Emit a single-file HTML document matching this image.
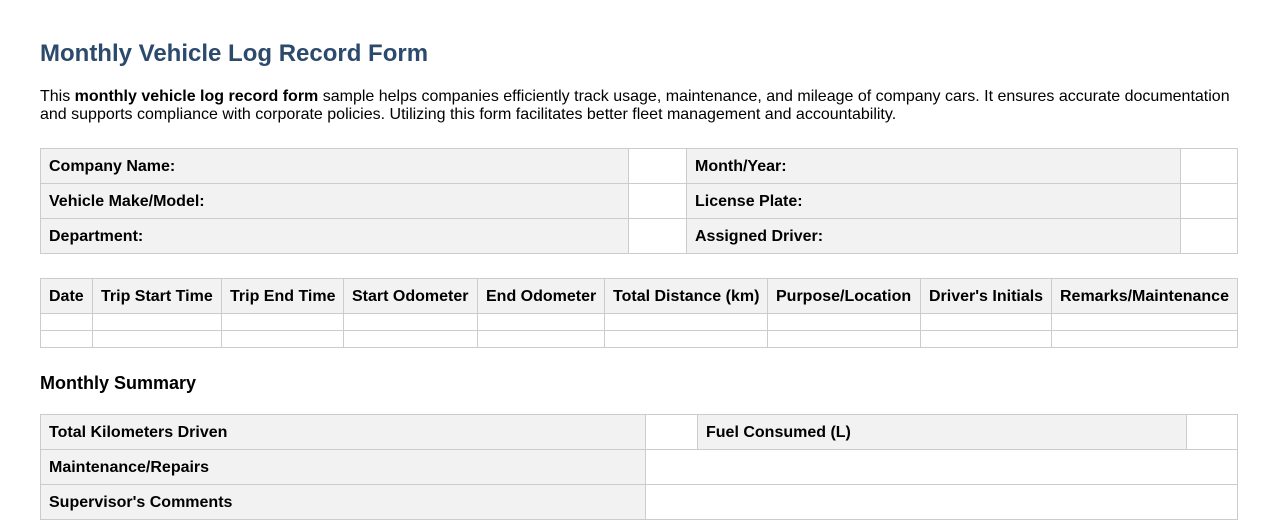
<!DOCTYPE html>
<html><head><style>
body{margin:0;background:#fff;font-family:"Liberation Sans",Arial,sans-serif;color:#000;}
h1{position:absolute;left:40px;top:40px;margin:0;font-size:24px;color:#2c4a6b;font-weight:bold;}
p{position:absolute;left:40px;top:88px;margin:0;font-size:16px;line-height:18px;width:1200px;}
table{border-collapse:collapse;table-layout:fixed;width:1197px;position:absolute;left:40px;}
td,th{border:1px solid #ccc;font-size:16px;font-weight:bold;padding:2px 8px 0;text-align:left;white-space:nowrap;overflow:hidden;}
.g{background:#f2f2f2;}
h2{position:absolute;left:40px;top:373px;margin:0;font-size:18px;font-weight:bold;}
</style></head><body>
<h1>Monthly Vehicle Log Record Form</h1>
<p>This <b>monthly vehicle log record form</b> sample helps companies efficiently track usage, maintenance, and mileage of company cars. It ensures accurate documentation and supports compliance with corporate policies. Utilizing this form facilitates better fleet management and accountability.</p>
<table style="top:148px">
<colgroup><col style="width:588px"><col style="width:58px"><col style="width:494px"><col style="width:57px"></colgroup>
<tr style="height:35px"><td class="g">Company Name:</td><td></td><td class="g">Month/Year:</td><td></td></tr>
<tr style="height:35px"><td class="g">Vehicle Make/Model:</td><td></td><td class="g">License Plate:</td><td></td></tr>
<tr style="height:35px"><td class="g">Department:</td><td></td><td class="g">Assigned Driver:</td><td></td></tr>
</table>
<table style="top:278px">
<colgroup><col style="width:52px"><col style="width:129px"><col style="width:122px"><col style="width:134px"><col style="width:127px"><col style="width:163px"><col style="width:153px"><col style="width:131px"><col style="width:186px"></colgroup>
<tr style="height:35px" class="g"><th>Date</th><th>Trip Start Time</th><th>Trip End Time</th><th>Start Odometer</th><th>End Odometer</th><th>Total Distance (km)</th><th>Purpose/Location</th><th>Driver's Initials</th><th>Remarks/Maintenance</th></tr>
<tr style="height:17px"><td></td><td></td><td></td><td></td><td></td><td></td><td></td><td></td><td></td></tr>
<tr style="height:17px"><td></td><td></td><td></td><td></td><td></td><td></td><td></td><td></td><td></td></tr>
</table>
<h2>Monthly Summary</h2>
<table style="top:414px">
<colgroup><col style="width:605px"><col style="width:52px"><col style="width:489px"><col style="width:51px"></colgroup>
<tr style="height:35px"><td class="g">Total Kilometers Driven</td><td></td><td class="g">Fuel Consumed (L)</td><td></td></tr>
<tr style="height:35px"><td class="g">Maintenance/Repairs</td><td colspan="3"></td></tr>
<tr style="height:35px"><td class="g">Supervisor's Comments</td><td colspan="3"></td></tr>
</table>
</body></html>
